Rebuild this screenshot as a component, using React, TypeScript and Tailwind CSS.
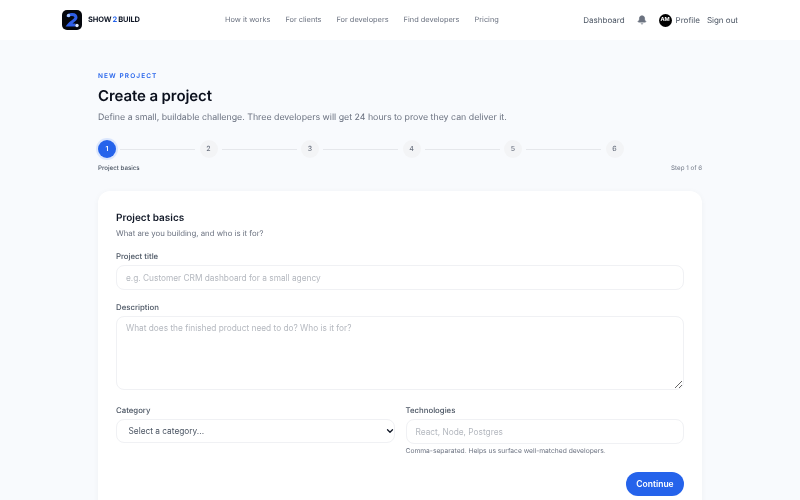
import { Bell, ChevronDown } from "lucide-react"

const navLinks = ["How it works", "For clients", "For developers", "Find developers", "Pricing"]
const steps = [1, 2, 3, 4, 5, 6]

function Logo() {
  return (
    <svg width="20" height="20" viewBox="0 0 20 20">
      <rect width="20" height="20" rx="5" fill="#05070d" />
      <path d="M6 7 C6.5 3.5 14 3.5 14 7.5 C14 10.5 9 11.5 6.5 15 L13.5 15" fill="none" stroke="#2f5fe8" strokeWidth="3" />
      <circle cx="6.5" cy="5.5" r="1.7" fill="#a9c4fb" />
      <circle cx="15" cy="15.5" r="1.7" fill="#dbe6fd" />
    </svg>
  )
}

function Header() {
  return (
    <header className="h-10 bg-white flex items-center justify-between px-[62px] text-[8px]">
      <div className="flex items-center gap-[6px] w-[163px]">
        <Logo />
        <span className="text-[7.5px] font-bold text-[#111827] tracking-[-0.1px]">
          SHOW<span className="text-[#2563eb] mx-[1px]">2</span>BUILD
        </span>
      </div>
      <nav className="flex items-center gap-[15px] text-[7.4px] text-[#6b7280] mr-auto">
        {navLinks.map((link) => (
          <a key={link}>{link}</a>
        ))}
      </nav>
      <div className="flex items-center text-[#4b5563]">
        <span>Dashboard</span>
        <Bell className="w-[10px] h-[10px] ml-[12px] text-[#6b7280] fill-[#6b7280]" />
        <span className="ml-[12px] w-[13px] h-[13px] rounded-full bg-black text-white text-[5.5px] font-bold flex items-center justify-center">AM</span>
        <span className="ml-[4px]">Profile</span>
        <span className="ml-[7px]">Sign out</span>
      </div>
    </header>
  )
}

function Stepper() {
  return (
    <div className="mt-[15px]">
      <div className="flex items-center gap-[2.5px] -mr-[2.5px]">
        {steps.map((step) => (
          <div key={step} className="flex-1 flex items-center gap-[4px]">
            <span
              className={
                step === 1
                  ? "w-[18px] h-[18px] shrink-0 rounded-full bg-[#2563eb] text-white text-[7px] font-semibold flex items-center justify-center shadow-[0_0_0_2px_#dbe6fd]"
                  : "w-[18px] h-[18px] shrink-0 rounded-full bg-[#f3f4f6] text-[#6b7280] text-[7px] font-medium flex items-center justify-center"
              }
            >
              {step}
            </span>
            {step < 6 && <span className="flex-1 h-px mr-[2px] bg-[#e5e7eb]" />}
          </div>
        ))}
      </div>
      <div className="flex items-center justify-between mt-[6px] text-[6.2px] leading-[10px]">
        <span className="text-[#4b5563] font-medium">Project basics</span>
        <span className="text-[#6b7280]">Step 1 of 6</span>
      </div>
    </div>
  )
}

const labelCls = "block text-[7.8px] leading-[12px] font-medium text-[#4b5563] mb-[3px]"
const fieldCls =
  "block w-full rounded-[8px] border border-[#f0f1f4] bg-white text-[8.3px] outline-none"
const inputCls = `${fieldCls} px-[9px] text-[#111827] placeholder:text-[#b4b8bf]`

function Card() {
  return (
    <div className="mt-[17px] bg-white rounded-[12px] shadow-[0_1px_6px_rgba(17,24,39,0.04)] px-[18px] pt-[18.5px] pb-[16px]">
      <h2 className="text-[10px] leading-[16px] font-semibold text-[#111827]">Project basics</h2>
      <p className="mt-[1.5px] text-[7.8px] leading-[12px] text-[#6b7280]">What are you building, and who is it for?</p>

      <div className="mt-[11px]">
        <label className={labelCls}>Project title</label>
        <input className={`${inputCls} h-[25px]`} placeholder="e.g. Customer CRM dashboard for a small agency" />
      </div>

      <div className="mt-[11px]">
        <label className={labelCls}>Description</label>
        <textarea
          className={`${inputCls} h-[74px] py-[5px]`}
          placeholder="What does the finished product need to do? Who is it for?"
        />
      </div>

      <div className="mt-[14px] grid grid-cols-2 gap-[11px]">
        <div>
          <label className={labelCls}>Category</label>
          <div className="relative">
            <select className={`${fieldCls} h-[24px] appearance-none pl-[11.5px] pr-[9px] text-[#4b5563]`}>
              <option>Select a category...</option>
            </select>
            <ChevronDown
              className="absolute right-0 top-[7px] w-[10px] h-[10px] text-[#111827]"
              strokeWidth={3}
            />
          </div>
        </div>
        <div>
          <label className={labelCls}>Technologies</label>
          <input className={`${inputCls} h-[25px]`} placeholder="React, Node, Postgres" />
          <p className="mt-[2px] text-[6.7px] leading-[10px] text-[#6b7280]">
            Comma-separated. Helps us surface well-matched developers.
          </p>
        </div>
      </div>

      <div className="flex justify-end mt-[16px]">
        <button className="h-[24px] w-[58px] rounded-full bg-[#2563eb] text-white text-[8.5px] font-semibold">
          Continue
        </button>
      </div>
    </div>
  )
}

export default function App() {
  return (
    <div className="h-[500px] overflow-hidden bg-[#f8fafd] font-['Inter',sans-serif] antialiased will-change-transform [text-rendering:geometricPrecision]">
      <Header />
      <main className="w-[604px] mx-auto pt-[32px]">
        <div className="text-[6.5px] leading-[9px] font-semibold tracking-[1.1px] text-[#2563eb]">NEW PROJECT</div>
        <h1 className="mt-[4px] text-[15px] leading-[22px] font-semibold tracking-[-0.1px] text-[#0a0f1c]">Create a project</h1>
        <p className="mt-[4px] text-[8.8px] leading-[14px] text-[#6b7280]">
          Define a small, buildable challenge. Three developers will get 24 hours to prove they can deliver it.
        </p>
        <Stepper />
        <Card />
      </main>
    </div>
  )
}
